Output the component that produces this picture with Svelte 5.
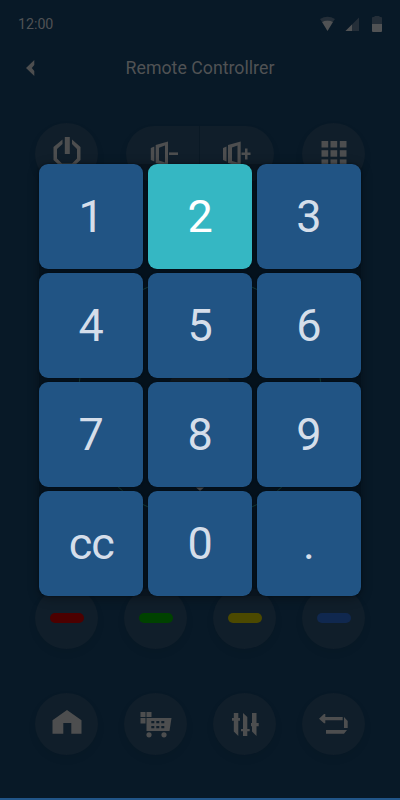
<script>
  const keys = ['1', '2', '3', '4', '5', '6', '7', '8', '9', 'cc', '0', '.'];
  const colors = ['#4c0000', '#004200', '#4c4900', '#10284f'];
</script>

<div class="screen">
  <header class="status">
    <span>12:00</span>
    <svg width="64" height="18" viewBox="0 0 64 18">
      <path d="M0 3Q7.5-1.5 15 3L12.8 6Q7.5 3.2 2 6Z" fill="#242e38" />
      <path d="M2 6Q7.5 3.2 13 6L7.5 15Z" fill="#505254" />
      <path d="M25.5 15L39 1.5V15Z" fill="#242e38" />
      <path d="M25.5 15L32 8.5V15Z" fill="#505254" />
      <path d="M52 2Q52 1 53 1H54.5V0H59.5V1H61Q62 1 62 2V8H52Z" fill="#242e38" />
      <path d="M52 8H62V15Q62 16 61 16H53Q52 16 52 15Z" fill="#505254" />
    </svg>
  </header>
  <nav>
    <svg class="back" width="10" height="18" viewBox="0 0 10 18"><path d="M8.3 1V6L5.8 9L8.3 12V17L0 9Z" /></svg>
    <h1>Remote Controllrer</h1>
  </nav>

  <main>
    <div class="row top">
      <div class="round">
        <svg width="62" height="62" viewBox="0 0 62 62"><path d="M28.8 14H33.8V31H28.8Z" /><path d="M26.5 16.5L17.5 24V37L24.5 43.5H37.5L44.5 37V24L36 16.5V21L41 26V35.5L36 40.5H26L21 35.5V26L26.5 21Z" /></svg>
      </div>
      <div class="volume">
        <svg width="74" height="56" viewBox="0 0 74 56"><path d="M24.8 22L28.3 20.5V35.5L24.8 34Z" /><path fill-rule="evenodd" d="M29.7 19L42 15.5V40.5L29.7 37ZM33 21.7V34.5L39 36.5V19.5Z" /><path d="M43 26.4H52V29H43Z" /></svg>
        <svg class="plus" width="74" height="56" viewBox="0 0 74 56"><path d="M23 22L26.5 20.5V35.5L23 34Z" /><path fill-rule="evenodd" d="M28 19L40.7 15.5V40.5L28 37ZM32 21.5V35L37.5 36.5V19.5Z" /><path d="M41.5 26.4H45V22.5H47.5V26.4H50.5V29H47.5V33.5H45V29H41.5Z" /></svg>
      </div>
      <div class="round">
        <svg width="62" height="62" viewBox="0 0 62 62">
          {#each [18.5, 27.5, 36.8] as x}
            {#each [18, 27.2, 36.4] as y}
              <rect {x} {y} width="6.7" height="6.5" />
            {/each}
          {/each}
        </svg>
      </div>
    </div>

    <div class="pad">
      <svg width="246" height="244" viewBox="-1 0 246 244">
        <circle cx="122" cy="122" r="121.7" fill="none" stroke="#1d5a52" />
        <circle cx="122" cy="122" r="34" fill="#18242b" />
        <path d="M118 212.5H126L122 216Z" fill="#6b6c6c" />
      </svg>
    </div>

    <div class="row shades">
      {#each colors as color}
        <div class="round"><i style="background: {color}"></i></div>
      {/each}
    </div>

    <div class="row tools">
      <div class="round"><svg width="62" height="62" viewBox="0 0 62 62"><path d="M31 17L45.5 27.3V40.7H35.3V30H27.3V40.7H16.5V27.3Z" /></svg></div>
      <div class="round">
        <svg width="62" height="62" viewBox="0 0 62 62">
          <path d="M15.5 19H20.5V24H15.5ZM21.5 19H26.5V24H21.5ZM15.5 25H20.5V30.5H15.5Z" />
          <path fill-rule="evenodd" d="M21.5 25H46.5L44.5 38H21.5ZM26.3 28V30.3H29.3V28ZM31.3 28V30.3H34.3V28ZM36.3 28V30.3H39.3V28ZM26.3 33V35.3H29.3V33ZM31.3 33V35.3H34.3V33ZM36.3 33V35.3H39.3V33Z" />
          <circle cx="24" cy="41.8" r="2.6" /><circle cx="39" cy="41.8" r="2.6" />
        </svg>
      </div>
      <div class="round"><svg width="62" height="62" viewBox="0 0 62 62"><path d="M19.8 20H24.3V25H26V27.8H24.3V43L19.8 38.5V27.8H18V25H19.8ZM29 20L33.3 24V36H35.7V38.3H33.3V43H29V38.3H27V36H29ZM38 20H42.5V30H44.7V33.3H42.5V43L38 38.5V33.3H37V30H38Z" /></svg></div>
      <div class="round"><svg width="62" height="62" viewBox="0 0 62 62"><path d="M16 25.7L21 21H22.3V24H39.7V27.3H22.3V30.3H21ZM41 24L44.7 28V35H41ZM23 37H44L41 40.8H23Z" /></svg></div>
    </div>
  </main>
  <footer></footer>

  <div class="keypad">
    {#each keys as key}
      <button class:active={key === '2'} class:word={key === 'cc'}>{key}</button>
    {/each}
  </div>
</div>

<style>
  :global(body) { margin: 0; background: #081927; }
  .screen { position: relative; box-sizing: border-box; width: 400px; height: 800px; overflow: hidden; display: flex; flex-direction: column; background: #081927; color: #505254; font-family: Roboto, sans-serif; }
  svg { display: block; fill: #4d4e4f; }
  .status { height: 48px; box-sizing: border-box; padding: 14px 16px 0 18px; display: flex; justify-content: space-between; font-size: 14.2px; line-height: 20px; }
  .status svg { margin-top: 2px; }
  nav { height: 40px; display: flex; align-items: center; }
  .back { margin-left: 26px; }
  h1 { flex: 1; margin: 0 36px 0 0; text-align: center; font-size: 17.75px; line-height: 24px; font-weight: 400; }
  main { flex: 1; display: flex; flex-direction: column; padding: 34.5px 35px 0; }
  .row { display: flex; justify-content: space-between; align-items: center; height: 62px; }
  .round { width: 63px; height: 62px; border-radius: 50%; background: #101e2a; box-shadow: 0 4px 9px #0004160f; display: flex; align-items: center; justify-content: center; }
  .volume { width: 148px; height: 56px; border-radius: 28px; background: #101e2a; display: flex; box-shadow: 0 4px 9px #0004160f; }
  .plus { box-shadow: -1px 0 #0a1925; }
  .pad { height: 244px; margin-top: 90.5px; display: flex; justify-content: center; }
  .shades { margin-top: 68px; }
  .shades i { width: 34px; height: 10.5px; border-radius: 5.5px; }
  .tools { margin-top: 44px; }
  footer { height: 2.5px; background: #215588; }
  .keypad { position: absolute; left: 39px; top: 164.3px; display: grid; grid-template-columns: repeat(3, 104.4px); grid-auto-rows: 104.6px; gap: 4.3px 4.5px; border-radius: 9px; box-shadow: 0 2px 12px #0005; background: #00060d66; }
  button { border: 0; border-radius: 9px; margin: 0; padding: 0; background: #215484; color: #d5deea; font: 400 45px/1 Roboto, sans-serif; box-shadow: 0 0 2px #0008; }
  .active { background: #35b7c3; color: #fff; }
  .word { letter-spacing: -1px; }
</style>
